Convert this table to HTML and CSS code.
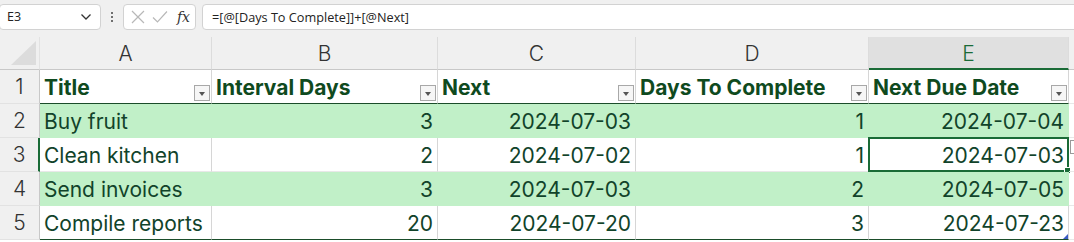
FILE: index.html
```html
<!DOCTYPE html>
<html lang="en">
<head>
    <meta charset="UTF-8">
    <meta name="viewport" content="width=device-width, initial-scale=1.0">
    <title>Chores</title>
    <link rel="stylesheet" href="styles.css">
</head>
<body>
    <div class="formula-bar">
        <div class="name-box">
            <span>E3</span>
            <svg class="chevron" width="12" height="8" viewBox="0 0 12 8"><path d="M1.5 1.5 L6 6 L10.5 1.5" fill="none" stroke="#333" stroke-width="1.3"/></svg>
        </div>
        <div class="dots"><span></span><span></span><span></span></div>
        <div class="fx-box">
            <svg width="14" height="14" viewBox="0 0 14 14"><path d="M1 1 L13 13 M13 1 L1 13" stroke="#b8b8b8" stroke-width="1.2"/></svg>
            <svg width="16" height="14" viewBox="0 0 16 14"><path d="M1 7.5 L5.5 12 L15 1.5" fill="none" stroke="#b8b8b8" stroke-width="1.2"/></svg>
            <span class="fx">fx</span>
        </div>
        <div class="formula">=[@[Days To Complete]]+[@Next]</div>
    </div>

    <div class="sheet">
        <div class="corner"><span></span></div>
        <div class="col-hd">A</div>
        <div class="col-hd">B</div>
        <div class="col-hd">C</div>
        <div class="col-hd">D</div>
        <div class="col-hd active">E</div>
        <div class="col-hd"></div>

        <div class="row-hd">1</div>
        <div class="cell th">Title<span class="filter"></span></div>
        <div class="cell th">Interval Days<span class="filter"></span></div>
        <div class="cell th">Next<span class="filter"></span></div>
        <div class="cell th">Days To Complete<span class="filter"></span></div>
        <div class="cell th">Next Due Date<span class="filter"></span></div>
        <div class="cell"></div>

        <div class="row-hd">2</div>
        <div class="cell band">Buy fruit</div>
        <div class="cell band num">3</div>
        <div class="cell band num">2024-07-03</div>
        <div class="cell band num">1</div>
        <div class="cell band num">2024-07-04</div>
        <div class="cell"></div>

        <div class="row-hd active">3</div>
        <div class="cell">Clean kitchen</div>
        <div class="cell num">2</div>
        <div class="cell num">2024-07-02</div>
        <div class="cell num">1</div>
        <div class="cell num selected">2024-07-03<span class="handle"></span></div>
        <div class="cell"><span class="paste-tag"></span></div>

        <div class="row-hd">4</div>
        <div class="cell band">Send invoices</div>
        <div class="cell band num">3</div>
        <div class="cell band num">2024-07-03</div>
        <div class="cell band num">2</div>
        <div class="cell band num">2024-07-05</div>
        <div class="cell"></div>

        <div class="row-hd">5</div>
        <div class="cell last">Compile reports</div>
        <div class="cell last num">20</div>
        <div class="cell last num">2024-07-20</div>
        <div class="cell last num">3</div>
        <div class="cell last num">2024-07-23<span class="resize"></span></div>
        <div class="cell"></div>
    </div>
</body>
</html>
```

FILE: styles.css
```css
html, body {
    height: 242px;
    overflow: hidden;
}
body {
    margin: 0;
    background: #ffffff;
    font-family: Inter, "Open Sans", sans-serif;
}

/* top strip: name box, buttons, formula */
.formula-bar {
    display: flex;
    align-items: center;
    height: 37px;
    background: #f0f0f0;
    box-sizing: border-box;
    padding-bottom: 4px;
    font-family: "Open Sans", "Noto Sans", sans-serif;
}
.name-box, .fx-box, .formula {
    height: 26px;
    box-sizing: border-box;
    background: white;
    border: 1px solid #d2d2d2;
    border-radius: 4px;
    display: flex;
    align-items: center;
}
.name-box {
    width: 102px;
    margin-left: -1px;
    padding: 0 8px 0 7px;
    justify-content: space-between;
    font-size: 12.5px;
    color: #222;
}
.chevron {
    margin-top: 1px;
}
.dots {
    width: 22px;
    display: flex;
    flex-direction: column;
    align-items: center;
    gap: 2px;
}
.dots span {
    width: 2px;
    height: 2px;
    background: #444;
    border-radius: 1px;
}
.fx-box {
    width: 73px;
    padding: 0 5px 0 7px;
    gap: 7px;
}
.fx {
    font-family: "DejaVu Serif", "Liberation Serif", serif;
    font-style: italic;
    font-size: 14px;
    color: #333;
    margin-left: 2px;
}
.formula {
    flex: 1;
    margin-left: 6px;
    margin-right: -6px;
    padding-left: 9px;
    font-size: 12.7px;
    color: #222;
}

/* grid */
.sheet {
    display: grid;
    grid-template-columns: 40px 172px 226px 198px 233px 200px 1fr;
    grid-template-rows: 33px repeat(5, 34px) 4px;
    font-size: 21px;
}
.corner, .col-hd, .row-hd {
    background: #f0f0f0;
    color: #333;
    box-sizing: border-box;
    display: flex;
    align-items: center;
    justify-content: center;
}
.corner {
    border-right: 1px solid #e2e2e2;
    border-bottom: 1px solid #c8c8c8;
    align-items: flex-end;
    justify-content: flex-end;
    padding: 0 3px 4px 0;
}
.corner span {
    width: 25px;
    height: 24px;
    background: #dcdcdc;
    clip-path: polygon(100% 0, 100% 100%, 0 100%);
}
.col-hd {
    border-right: 1px solid #dcdcdc;
    border-bottom: 1px solid #c8c8c8;
    padding-top: 1px;
    font-weight: 300;
}
.col-hd.active {
    background: #e0e0e0;
    color: #1a6b37;
    border-bottom: 2px solid #1a6b37;
    padding-top: 2px;
}
.row-hd {
    border-right: 1px solid #c8c8c8;
    border-bottom: 1px solid #e2e2e2;
    font-weight: 300;
}
.row-hd.active {
    border-right: 2px solid #1a6b37;
}

.cell {
    position: relative;
    box-sizing: border-box;
    border-right: 1px solid #d6d6d6;
    border-bottom: 1px solid #e8e8e8;
    padding: 1px 4px 0;
    display: flex;
    align-items: center;
    color: #11432a;
    white-space: nowrap;
}
.num {
    justify-content: flex-end;
}
.th {
    font-weight: bold;
    color: #0f4a1e;
    justify-content: space-between;
    border-bottom: 1px solid #1b4d2a;
    padding-right: 1px;
}
.band {
    background: #c1f0c8;
    border-right-color: #c1f0c8;
    border-bottom-color: #c1f0c8;
}
.last {
    border-bottom: 1px solid #1b4d2a;
}

/* filter dropdown on header cells */
.filter {
    align-self: flex-end;
    margin-bottom: 2px;
    width: 16px;
    height: 16px;
    box-sizing: border-box;
    border: 1px solid #a8a8a8;
    background: #f6f6f6;
    position: relative;
}
.filter::after {
    content: "";
    position: absolute;
    left: 4px;
    top: 6px;
    border-left: 3.5px solid transparent;
    border-right: 3.5px solid transparent;
    border-top: 4px solid #555;
}

/* active cell outline */
.selected::before {
    content: "";
    position: absolute;
    left: -1px;
    top: -1px;
    right: -1px;
    bottom: -1px;
    border: 2px solid #1a6b37;
}
.handle {
    position: absolute;
    right: -3px;
    bottom: -3px;
    width: 5px;
    height: 5px;
    background: #1a6b37;
    border: 1px solid white;
}
.paste-tag {
    position: absolute;
    left: 1px;
    top: 2px;
    width: 8px;
    height: 12px;
    border: 1px solid #9a9a9a;
    background: white;
}
.resize {
    position: absolute;
    right: 0;
    bottom: 0;
    width: 5px;
    height: 5px;
    background: #3b5bc4;
    clip-path: polygon(100% 0, 100% 100%, 0 100%);
}
```
